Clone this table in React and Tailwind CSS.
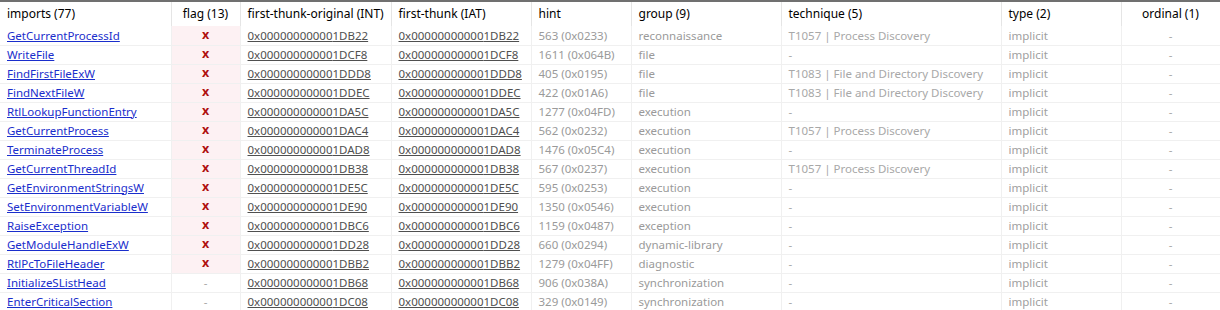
import React from "react";

const cols = [
  { label: "imports (77)", w: 171 },
  { label: "flag (13)", w: 69, center: true },
  { label: "first-thunk-original (INT)", w: 151 },
  { label: "first-thunk (IAT)", w: 140 },
  { label: "hint", w: 100 },
  { label: "group (9)", w: 150 },
  { label: "technique (5)", w: 220 },
  { label: "type (2)", w: 120 },
  { label: "ordinal (1)", w: 99, center: true },
];

const PD = "T1057 | Process Discovery";
const FD = "T1083 | File and Directory Discovery";

const rows = [
  ["GetCurrentProcessId", true, "1DB22", "563 (0x0233)", "reconnaissance", PD],
  ["WriteFile", true, "1DCF8", "1611 (0x064B)", "file", "-"],
  ["FindFirstFileExW", true, "1DDD8", "405 (0x0195)", "file", FD],
  ["FindNextFileW", true, "1DDEC", "422 (0x01A6)", "file", FD],
  ["RtlLookupFunctionEntry", true, "1DA5C", "1277 (0x04FD)", "execution", "-"],
  ["GetCurrentProcess", true, "1DAC4", "562 (0x0232)", "execution", PD],
  ["TerminateProcess", true, "1DAD8", "1476 (0x05C4)", "execution", "-"],
  ["GetCurrentThreadId", true, "1DB38", "567 (0x0237)", "execution", PD],
  ["GetEnvironmentStringsW", true, "1DE5C", "595 (0x0253)", "execution", "-"],
  ["SetEnvironmentVariableW", true, "1DE90", "1350 (0x0546)", "execution", "-"],
  ["RaiseException", true, "1DBC6", "1159 (0x0487)", "exception", "-"],
  ["GetModuleHandleExW", true, "1DD28", "660 (0x0294)", "dynamic-library", "-"],
  ["RtlPcToFileHeader", true, "1DBB2", "1279 (0x04FF)", "diagnostic", "-"],
  ["InitializeSListHead", false, "1DB68", "906 (0x038A)", "synchronization", "-"],
  ["EnterCriticalSection", false, "1DC08", "329 (0x0149)", "synchronization", "-"],
];

const cell = "h-[19px] border-r border-b border-[#f0f0f0] px-[7px] whitespace-nowrap overflow-hidden";

export default function App() {
  return (
    <div
      className="w-[1220px] h-[310px] overflow-hidden bg-white border-t-2 border-[#707070] text-[12px] leading-none"
      style={{ fontFamily: '"Noto Sans", "Open Sans", sans-serif' }}
    >
      <table className="table-fixed border-collapse w-[1220px]">
        <colgroup>
          {cols.map((c) => (
            <col key={c.label} style={{ width: c.w }} />
          ))}
        </colgroup>
        <thead>
          <tr>
            {cols.map((c) => (
              <th
                key={c.label}
                className={`h-[24px] font-normal text-black border-r border-[#e5e5e5] px-[7px] whitespace-nowrap ${
                  c.center ? "text-center" : "text-left"
                }`}
              >
                {c.label}
              </th>
            ))}
          </tr>
        </thead>
        <tbody className="text-[11.5px]">
          {rows.map(([name, flag, addr, hint, group, tech]) => (
            <tr key={name}>
              <td className={cell}>
                <a href="#" className="text-[#1a2ecc] underline">
                  {name}
                </a>
              </td>
              <td
                className={`${cell} text-center ${
                  flag ? "bg-[#fdf1f3] text-[#b01010] font-bold text-[12.5px]" : "text-[#a8a8a8]"
                }`}
              >
                {flag ? "x" : "-"}
              </td>
              <td className={`${cell} text-[#505050] underline`}>0x00000000000{addr}</td>
              <td className={`${cell} text-[#505050] underline`}>0x00000000000{addr}</td>
              <td className={`${cell} text-[#9a9a9a]`}>{hint}</td>
              <td className={`${cell} text-[#9a9a9a]`}>{group}</td>
              <td className={`${cell} text-[#a8a8a8]`}>{tech}</td>
              <td className={`${cell} text-[#a0a0a0]`}>implicit</td>
              <td className={`${cell} text-center text-[#a8a8a8]`}>-</td>
            </tr>
          ))}
        </tbody>
      </table>
    </div>
  );
}
